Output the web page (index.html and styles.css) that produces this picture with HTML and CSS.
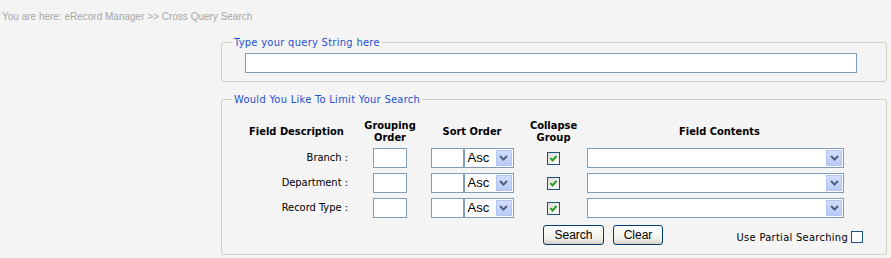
FILE: index.html
```html
<!DOCTYPE html>
<html lang="en">
<head>
  <meta charset="UTF-8" />
  <title>Cross Query Search</title>
  <link rel="stylesheet" href="styles.css">
</head>
<body>
  <div class="crumb">You are here: eRecord Manager &gt;&gt; Cross Query Search</div>

  <div class="main">
    <!-- query string -->
    <fieldset class="box query-box">
      <legend>Type your query String here</legend>
      <input type="text" class="query-input" />
    </fieldset>

    <!-- limit search -->
    <fieldset class="box limit-box">
      <legend>Would You Like To Limit Your Search</legend>
      <div class="grid">
        <div class="hd">Field Description</div>
        <div class="hd">Grouping<br>Order</div>
        <div class="hd">Sort Order</div>
        <div class="hd">Collapse<br>Group</div>
        <div class="hd">Field Contents</div>

        <div class="lbl">Branch :</div>
        <div class="cell"><input type="text" class="small-input" /></div>
        <div class="cell sort">
          <input type="text" class="sort-input" />
          <div class="dd dd-sort"><span class="dd-text">Asc</span><span class="dd-btn"><svg width="9" height="6" viewBox="0 0 9 6"><path d="M1 1 L4.5 4.5 L8 1" fill="none" stroke="#4d6185" stroke-width="2"/></svg></span></div>
        </div>
        <div class="cell"><span class="chk"><svg width="11" height="11" viewBox="0 0 11 11"><path d="M2.5 5 L4.5 7.5 L8.5 3" fill="none" stroke="#21a121" stroke-width="2"/></svg></span></div>
        <div class="cell wide-cell"><div class="dd dd-wide"><span class="dd-text"></span><span class="dd-btn"><svg width="9" height="6" viewBox="0 0 9 6"><path d="M1 1 L4.5 4.5 L8 1" fill="none" stroke="#4d6185" stroke-width="2"/></svg></span></div></div>

        <div class="lbl">Department :</div>
        <div class="cell"><input type="text" class="small-input" /></div>
        <div class="cell sort">
          <input type="text" class="sort-input" />
          <div class="dd dd-sort"><span class="dd-text">Asc</span><span class="dd-btn"><svg width="9" height="6" viewBox="0 0 9 6"><path d="M1 1 L4.5 4.5 L8 1" fill="none" stroke="#4d6185" stroke-width="2"/></svg></span></div>
        </div>
        <div class="cell"><span class="chk"><svg width="11" height="11" viewBox="0 0 11 11"><path d="M2.5 5 L4.5 7.5 L8.5 3" fill="none" stroke="#21a121" stroke-width="2"/></svg></span></div>
        <div class="cell wide-cell"><div class="dd dd-wide"><span class="dd-text"></span><span class="dd-btn"><svg width="9" height="6" viewBox="0 0 9 6"><path d="M1 1 L4.5 4.5 L8 1" fill="none" stroke="#4d6185" stroke-width="2"/></svg></span></div></div>

        <div class="lbl">Record Type :</div>
        <div class="cell"><input type="text" class="small-input" /></div>
        <div class="cell sort">
          <input type="text" class="sort-input" />
          <div class="dd dd-sort"><span class="dd-text">Asc</span><span class="dd-btn"><svg width="9" height="6" viewBox="0 0 9 6"><path d="M1 1 L4.5 4.5 L8 1" fill="none" stroke="#4d6185" stroke-width="2"/></svg></span></div>
        </div>
        <div class="cell"><span class="chk"><svg width="11" height="11" viewBox="0 0 11 11"><path d="M2.5 5 L4.5 7.5 L8.5 3" fill="none" stroke="#21a121" stroke-width="2"/></svg></span></div>
        <div class="cell wide-cell"><div class="dd dd-wide"><span class="dd-text"></span><span class="dd-btn"><svg width="9" height="6" viewBox="0 0 9 6"><path d="M1 1 L4.5 4.5 L8 1" fill="none" stroke="#4d6185" stroke-width="2"/></svg></span></div></div>
      </div>

      <div class="actions">
        <button type="button" class="btn btn-search">Search</button>
        <button type="button" class="btn btn-clear">Clear</button>
        <span class="partial">Use Partial Searching <span class="chk empty"></span></span>
      </div>
    </fieldset>
  </div>
</body>
</html>
```

FILE: styles.css
```css
* {
  box-sizing: border-box;
}

body {
  margin: 0;
  background-color: #f4f4f4;
  font-family: 'DejaVu Sans Condensed', 'DejaVu Sans', sans-serif;
  font-size: 11px;
  color: #000;
}

.crumb {
  font-family: 'Liberation Sans', Arial, sans-serif;
  font-size: 10px;
  line-height: 13px;
  color: #a6a6a6;
  padding: 10px 2px 0;
  height: 23px;
  margin-bottom: 13px;
}

.main {
  margin-left: 221px;
  width: 666px;
}

.box {
  margin: 0;
  border: 1px solid #d0d0bf;
  border-radius: 3px;
  padding: 0 0 0 10px;
  min-width: 0;
}

.box legend {
  padding: 0 2px;
  line-height: 13px;
  letter-spacing: 0.3px;
  color: #1f50d0;
}

.query-box {
  padding-top: 4px;
  padding-bottom: 8px;
}

.query-input {
  display: block;
  margin: 0 0 0 13px;
  width: 612px;
  height: 20px;
  border: 1px solid #7f9db9;
  background: #fff;
  padding: 0 3px;
}

.limit-box {
  margin-top: 11px;
  padding-top: 15px;
  padding-bottom: 9px;
}

.grid {
  margin-left: 9px;
  display: grid;
  grid-template-columns: 111px 76px 88px 75px 257px;
  grid-template-rows: 22px 20px 20px 20px;
  row-gap: 5px;
}

.hd {
  font-weight: bold;
  line-height: 12px;
  text-align: center;
  display: flex;
  align-items: center;
  justify-content: center;
}

.lbl {
  text-align: right;
  padding-right: 4px;
  line-height: 20px;
}

.cell {
  display: flex;
  align-items: center;
  justify-content: center;
}

.wide-cell {
  justify-content: flex-start;
}

.small-input {
  width: 34px;
  height: 20px;
  border: 1px solid #7f9db9;
  background: #fff;
  margin: 0;
}

.sort-input {
  width: 33px;
  height: 20px;
  border: 1px solid #7f9db9;
  background: #fff;
  margin: 0;
}

.dd {
  height: 20px;
  border: 1px solid #7f9db9;
  background: #fff;
  display: flex;
  align-items: stretch;
  padding: 1px;
}

.dd-sort {
  width: 50px;
}

.dd-wide {
  width: 257px;
  flex-shrink: 0;
  margin-left: -4px;
}

.dd-text {
  flex: 1;
  font-family: 'Liberation Sans', Arial, sans-serif;
  font-size: 13px;
  line-height: 16px;
  padding-left: 2px;
}

.dd-btn {
  width: 16px;
  background: linear-gradient(#d2ddfb, #b8cbf7);
  border: 1px solid #b3c6f3;
  display: flex;
  align-items: center;
  justify-content: center;
}

.chk {
  display: inline-flex;
  align-items: center;
  justify-content: center;
  width: 13px;
  height: 13px;
  border: 1px solid #1c5180;
  background: linear-gradient(135deg, #dcdcd7, #fff);
}

.actions {
  margin: 7px 23px 0 311px;
  display: flex;
  align-items: center;
  height: 20px;
}

.btn {
  height: 20px;
  padding: 0;
  font-family: 'Liberation Sans', Arial, sans-serif;
  font-size: 12px;
  color: #000;
  border: 1px solid #003c74;
  border-radius: 3px;
  background: linear-gradient(#ffffff, #f0f0ea 70%, #d6d0c5);
  cursor: pointer;
}

.btn-search {
  width: 61px;
}

.btn-clear {
  width: 50px;
  margin-left: 9px;
}

.partial {
  margin-left: auto;
  display: flex;
  align-items: center;
  gap: 3px;
  padding-top: 4px;
  letter-spacing: 0.3px;
}

.chk.empty {
  background: #fff;
  width: 12px;
  height: 12px;
}
```
